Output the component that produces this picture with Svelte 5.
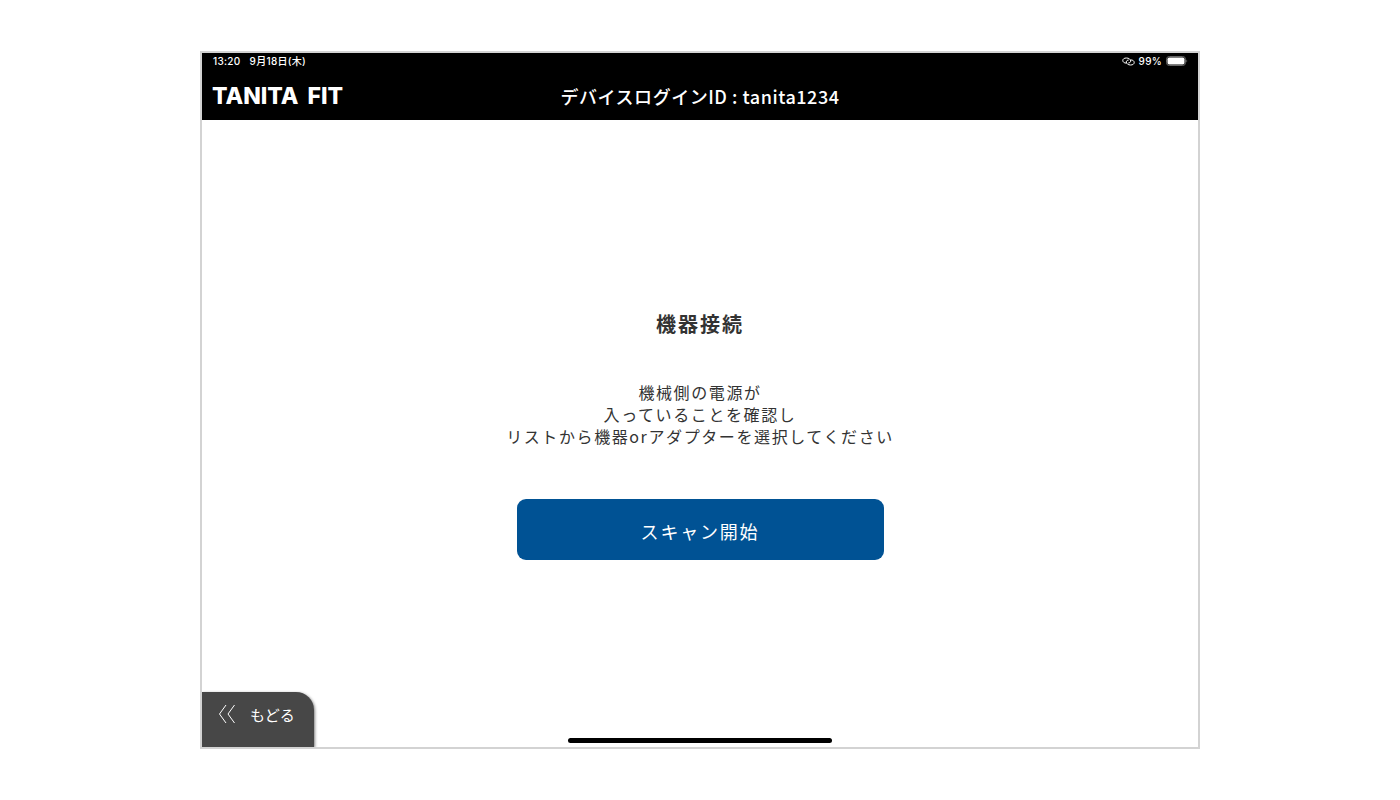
<script lang="ts">
	let time = '13:20';
	let date = '9月18日(木)';
	let battery = 99;
	let deviceId = 'tanita1234';

	const message = [
		'機械側の電源が',
		'入っていることを確認し',
		'リストから機器orアダプターを選択してください'
	];
</script>

<div class="page">
	<div class="device">
		<header>
			<div class="status">
				<div class="clock">
					<span>{time}</span>
					<span>{date}</span>
				</div>
				<div class="power">
					<svg class="link" viewBox="0 0 13 9" width="13" height="9" aria-hidden="true">
						<path d="M4.2 6.1C2.2 6.1 0.8 5 0.8 3.5S2.2 1 4.4 1C6.8 1 8.7 2.3 8.7 4C8.7 5.2 7.6 6 6.3 6" />
						<path d="M8.8 2.9C10.8 2.9 12.2 4 12.2 5.5S10.8 8 8.6 8C6.2 8 4.3 6.7 4.3 5C4.3 3.8 5.4 3 6.7 3" />
					</svg>
					<span>{battery}%</span>
					<svg viewBox="0 0 22 10" width="22" height="10" aria-hidden="true">
						<rect x="0.5" y="0.5" width="19" height="9" rx="2.8" fill="none" stroke="#666" />
						<rect x="1.5" y="1.5" width="17" height="7" rx="1.8" fill="#fff" />
						<path d="M20.5 3.3Q22 5 20.5 6.7Z" fill="#888" />
					</svg>
				</div>
			</div>
			<div class="bar">
				<div class="logo">
					<span>TANITA</span>
					<span>FIT</span>
				</div>
				<div class="login">デバイスログインID : {deviceId}</div>
			</div>
		</header>

		<main>
			<h1>機器接続</h1>
			<p>
				{#each message as line}
					<span>{line}</span>
				{/each}
			</p>
			<button class="scan">スキャン開始</button>
		</main>

		<footer>
			<button class="back">
				<svg viewBox="0 0 18 20" width="18" height="20" aria-hidden="true">
					<path d="M8 1L1.5 10L8 19M16.5 1L10 10L16.5 19" />
				</svg>
				もどる
			</button>
			<div class="home"></div>
		</footer>
	</div>
</div>

<style>
	:global(body) {
		margin: 0;
		background: #fff;
	}

	.page {
		box-sizing: border-box;
		display: flex;
		min-height: 100vh;
		padding: 51px 200px;
		font-family: "Noto Sans CJK JP", sans-serif;
		color: #333;
	}

	.device {
		flex: 1;
		display: flex;
		flex-direction: column;
		border: 2px solid #d3d3d3;
		overflow: hidden;
	}

	header {
		background: #000;
		color: #fff;
	}

	.status {
		display: flex;
		justify-content: space-between;
		padding: 0 10px 0 11px;
		font-family: Inter, "Noto Sans CJK JP", sans-serif;
		font-size: 10px;
		font-weight: 500;
		line-height: 16px;
		letter-spacing: 0.03em;
	}

	.clock {
		display: flex;
		gap: 9px;
	}

	.power {
		display: flex;
		align-items: center;
		gap: 4px;
	}

	.link {
		fill: none;
		stroke: #fff;
	}

	.bar {
		display: grid;
		grid-template-columns: 1fr auto 1fr;
		align-items: center;
		height: 51px;
		padding: 2px 10px 0;
		box-sizing: border-box;
	}

	.logo {
		display: flex;
		gap: 9px;
		font-family: Inter, sans-serif;
		font-size: 23px;
		font-weight: 800;
		line-height: 24px;
	}

	.login {
		font-size: 18px;
		font-weight: 500;
		line-height: 24px;
		letter-spacing: 0.03em;
	}

	main {
		flex: 1;
		display: flex;
		flex-direction: column;
		align-items: center;
		justify-content: center;
		padding-top: 58px;
	}

	h1 {
		margin: 0 0 43px;
		font-size: 20px;
		font-weight: 700;
		line-height: 28px;
		letter-spacing: 0.1em;
	}

	p {
		margin: 0 0 52px;
		font-size: 16px;
		line-height: 22px;
		letter-spacing: 0.1em;
		text-align: center;
	}

	p span {
		display: block;
	}

	button {
		border: 0;
		font-family: inherit;
		color: #fff;
		cursor: pointer;
	}

	.scan {
		width: 367px;
		max-width: 100%;
		height: 61px;
		padding: 2px 0 0;
		border-radius: 9px;
		background: #005294;
		font-size: 18px;
		letter-spacing: 0.1em;
	}

	footer {
		display: grid;
		grid-template-columns: 1fr auto 1fr;
		align-items: end;
	}

	.back {
		justify-self: start;
		display: flex;
		align-items: center;
		gap: 14px;
		height: 55px;
		padding: 0 19px 11px 16px;
		border-radius: 0 18px 0 0;
		background: #474747;
		box-shadow: 1px 1px 3px rgba(0, 0, 0, 0.5);
		font-size: 15px;
	}

	.back svg {
		fill: none;
		stroke: #fff;
	}

	.home {
		width: 264px;
		height: 5px;
		margin-bottom: 4px;
		border-radius: 3px;
		background: #000;
	}
</style>
